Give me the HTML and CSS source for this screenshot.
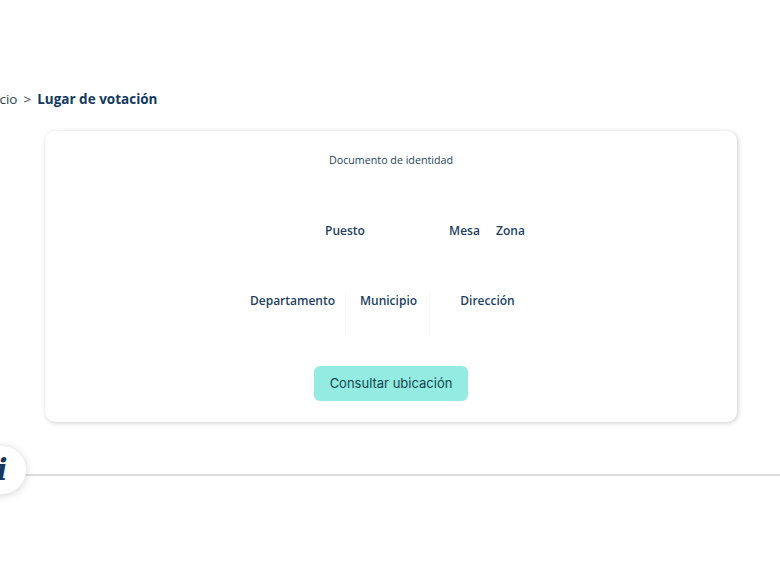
FILE: index.html
```html
<!DOCTYPE html>
<html lang="es">
<head>
<meta charset="utf-8">
<title>Lugar de votación</title>
<link rel="stylesheet" href="styles.css">
</head>
<body>
<main class="page">
  <nav class="crumbs">
    <span class="crumb">Inicio</span>
    <span class="sep">&gt;</span>
    <strong class="current">Lugar de votación</strong>
  </nav>
  <section class="card">
    <p class="doc-label">Documento de identidad</p>
    <div class="row row-one">
      <div class="cell cell-puesto">Puesto</div>
      <div class="cell">Mesa</div>
      <div class="cell">Zona</div>
    </div>
    <div class="row row-two">
      <div class="cell cell-line">Departamento</div>
      <div class="cell cell-line cell-muni">Municipio</div>
      <div class="cell">Dirección</div>
    </div>
    <div class="actions">
      <button class="consult" type="button">Consultar ubicación</button>
    </div>
  </section>
  <hr class="rule">
</main>
<div class="info-badge"><span class="info-i">i</span></div>
</body>
</html>
```
FILE: styles.css
```css
html, body {
  margin: 0;
  padding: 0;
  background: #fff;
  overflow: hidden;
  height: 565px;
}
body {
  font-family: "Open Sans", "Liberation Sans", sans-serif;
  color: #12395f;
}
.page {
  width: 780px;
  padding-top: 89px;
  box-sizing: border-box;
}
.crumbs {
  display: flex;
  align-items: center;
  gap: 6px;
  margin-left: -16px;
  height: 20px;
  font-size: 13.5px;
  line-height: 20px;
}
.crumb, .sep { color: #2d3f4f; }
.current {
  font-size: 13.5px;
  font-weight: 700;
  color: #12395f;
}
.card {
  margin: 22px 0 0 45px;
  width: 692px;
  height: 291px;
  box-sizing: border-box;
  padding-top: 22px;
  background: #fff;
  border-radius: 10px;
  box-shadow: 1px 1px 5px rgba(0, 0, 0, 0.2);
}
.doc-label {
  margin: 0;
  font-size: 10.7px;
  line-height: 15px;
  text-align: center;
  color: #1c4460;
}
.row {
  display: grid;
  font-size: 12px;
  font-weight: 600;
  line-height: 18px;
  text-align: center;
  color: #1d3f62;
}
.row-one {
  grid-template-columns: 192px 47px 45px;
  margin: 54px 0 0 204px;
  width: 284px;
}
.row-two {
  grid-template-columns: 106px 84px 115px;
  margin: 52px 0 0 195px;
  width: 305px;
  height: 44px;
}
.cell-line { border-right: 1px solid #f8f8f8; }
.cell-muni { padding-left: 2px; }
.actions {
  display: flex;
  justify-content: center;
  margin-top: 30px;
}
.consult {
  width: 154px;
  height: 35px;
  border: 0;
  border-radius: 6px;
  background: #93ebe1;
  color: #12464f;
  font-family: Inter, "Noto Sans", sans-serif;
  font-size: 13px;
  padding: 0 0 2px;
}
.rule {
  margin: 52px 0 0;
  height: 2px;
  border: 0;
  background: #dedede;
}
.info-badge {
  position: absolute;
  left: -22px;
  top: 446px;
  width: 48px;
  height: 48px;
  border-radius: 50%;
  background: #fff;
  box-shadow: 0 1px 8px rgba(0, 0, 0, 0.18);
  display: flex;
  align-items: center;
  justify-content: center;
}
.info-i {
  font-family: "DejaVu Serif", serif;
  font-style: italic;
  font-weight: 700;
  font-size: 29px;
  line-height: 1;
  color: #12395f;
}
```
